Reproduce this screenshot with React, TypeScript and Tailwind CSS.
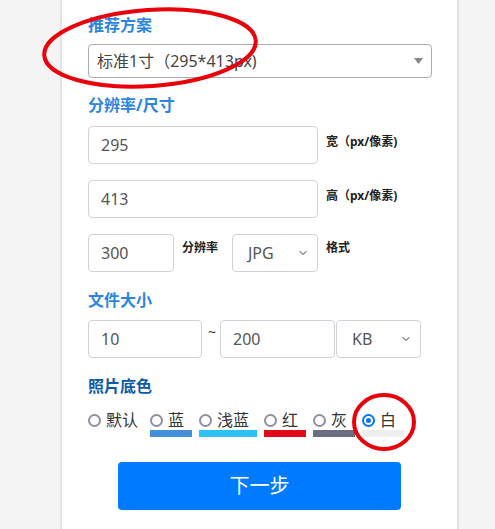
import { ChevronDown } from 'lucide-react';

const font = { fontFamily: '"Noto Sans", "Noto Sans CJK SC", sans-serif' };

function Title({ children, dark }: { children: React.ReactNode; dark?: boolean }) {
    return (
        <div
            className={`h-6 text-base font-bold leading-6 ${dark ? 'text-[#0b5ba8]' : 'text-[#2b85e0]'}`}
        >
            {children}
        </div>
    );
}

function TextBox({ value, className }: { value: string; className: string }) {
    return (
        <div
            className={`flex h-[38px] items-center rounded border border-[#ced4da] bg-white pl-3 text-base text-[#555] ${className}`}
        >
            {value}
        </div>
    );
}

function SelectBox({ value, className }: { value: string; className: string }) {
    return (
        <div
            className={`flex h-[38px] items-center justify-between rounded border border-[#ced4da] bg-white pl-[15px] pr-[8px] text-base text-[#555] ${className}`}
        >
            <span>{value}</span>
            <ChevronDown className="h-3 w-3 text-[#333]" strokeWidth={2} />
        </div>
    );
}

function Radio({ checked }: { checked?: boolean }) {
    return checked ? (
        <span className="flex h-[13px] w-[13px] items-center justify-center rounded-full border-2 border-[#0075ff]">
            <span className="h-[5px] w-[5px] rounded-full bg-[#0075ff]" />
        </span>
    ) : (
        <span className="h-[13px] w-[13px] rounded-full border-2 border-[#8f8f9d]" />
    );
}

const colors = [
    { label: '蓝', bar: 'bg-[#448fda]' },
    { label: '浅蓝', bar: 'bg-[#2ec0f9]' },
    { label: '红', bar: 'bg-[#e20a16]' },
    { label: '灰', bar: 'bg-[#6a6e80]' },
    { label: '白', bar: 'bg-[#eeeeee]', checked: true },
];

export default function App() {
    return (
        <div className="relative flex h-[529px] w-[495px] overflow-hidden bg-[#f4f4f4]" style={font}>
            <div className="ml-[60px] flex w-[399px] flex-col border-x-2 border-[#e3e3e3] bg-white pl-[26px]">
                <div className="mt-[13px]">
                    <Title>推荐方案</Title>
                </div>
                <div className="mt-[7px] flex h-[34px] w-[344px] items-center justify-between rounded border border-[#aaa] pl-[8px] pr-[8px] text-base text-[#444]">
                    <span>标准1寸（295*413px)</span>
                    <svg width="9" height="6" viewBox="0 0 9 6">
                        <path d="M0 0 L9 0 L4.5 6 Z" fill="#888" />
                    </svg>
                </div>

                <div className="mt-[15px]">
                    <Title>分辨率/尺寸</Title>
                </div>
                <div className="mt-[9px] flex items-start">
                    <TextBox value="295" className="w-[230px]" />
                    <span className="ml-2 mt-[7px] text-xs font-bold leading-[18px] text-[#222]">宽（px/像素)</span>
                </div>
                <div className="mt-4 flex items-start">
                    <TextBox value="413" className="w-[230px]" />
                    <span className="ml-2 mt-[7px] text-xs font-bold leading-[18px] text-[#222]">高（px/像素)</span>
                </div>
                <div className="mt-4 flex items-start">
                    <TextBox value="300" className="w-[86px]" />
                    <span className="ml-2 mt-[5px] w-[50px] text-xs font-bold leading-[18px] text-[#222]">分辨率</span>
                    <SelectBox value="JPG" className="w-[86px]" />
                    <span className="ml-2 mt-[5px] text-xs font-bold leading-[18px] text-[#222]">格式</span>
                </div>

                <div className="mt-4">
                    <Title>文件大小</Title>
                </div>
                <div className="mt-2 flex items-start">
                    <TextBox value="10" className="w-[114px]" />
                    <span className="ml-[6px] mr-[4px] mt-[4px] text-sm leading-4 text-[#333]">~</span>
                    <TextBox value="200" className="w-[115px]" />
                    <SelectBox value="KB" className="ml-px w-[85px]" />
                </div>

                <div className="mt-4">
                    <Title dark>照片底色</Title>
                </div>
                <div className="mt-[13px] flex items-start">
                    <div className="mr-[7px] flex flex-col pr-[5px]">
                        <div className="flex h-[18px] items-center">
                            <Radio />
                            <span className="ml-[5px] text-base leading-[18px] text-[#333]">默认</span>
                        </div>
                    </div>
                    {colors.map((c) => (
                        <div key={c.label} className="mr-[7px] flex flex-col">
                            <div className="flex h-[18px] items-center pr-[8px]">
                                <Radio checked={c.checked} />
                                <span className="ml-[5px] text-base leading-[18px] text-[#333]">{c.label}</span>
                            </div>
                            <div className={`mt-px h-[7px] w-full ${c.bar}`} />
                        </div>
                    ))}
                </div>

                <button className="ml-[30px] mt-[25px] h-12 w-[283px] rounded bg-[#007bff] text-xl text-white">
                    下一步
                </button>
            </div>

            <svg className="pointer-events-none absolute inset-0" width="495" height="529">
                <ellipse
                    cx="150"
                    cy="48"
                    rx="106"
                    ry="38"
                    transform="rotate(-4 150 48)"
                    fill="none"
                    stroke="#e8000b"
                    strokeWidth="4"
                />
                <ellipse cx="384" cy="422" rx="30" ry="27" fill="none" stroke="#e8000b" strokeWidth="4" />
            </svg>
        </div>
    );
}
